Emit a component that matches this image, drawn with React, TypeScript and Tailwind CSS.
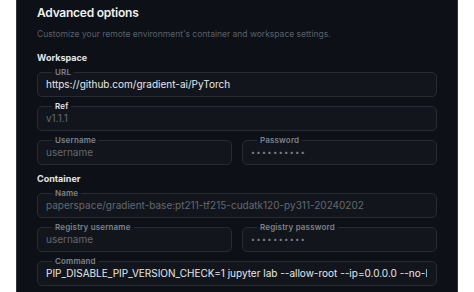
import React from 'react';

type FieldProps = {
  label: string;
  value: string;
  muted?: boolean;
  strongLabel?: boolean;
  secret?: boolean;
};

function Field({ label, value, muted, strongLabel, secret }: FieldProps) {
  return (
    <fieldset className="min-w-0 rounded-[5px] border border-[#272c34] bg-[#12161c] pl-[8px] pr-[9px] pb-[5px]">
      <legend
        className={`ml-[6px] px-[3px] text-[8px] leading-[8px] font-semibold tracking-[0.02em] ${
          strongLabel ? 'text-[#e4e6e9]' : 'text-[#7b828c]'
        }`}
      >
        {label}
      </legend>
      {secret ? (
        <div className="pt-[2px] h-[15px] text-[7px] leading-[13px] tracking-[1.6px] text-[#7b828c]">
          ••••••••••
        </div>
      ) : (
        <div
          className={`pt-[2px] text-[10px] leading-[13px] whitespace-nowrap overflow-hidden ${
            muted ? 'text-[#62686f]' : 'text-[#e6e8eb]'
          }`}
        >
          {value}
        </div>
      )}
    </fieldset>
  );
}

export default function App() {
  return (
    <div className="min-h-screen bg-white px-4 font-['Inter','Liberation_Sans',sans-serif]">
      <div className="h-[292px] overflow-hidden border-x border-[#30343b] bg-[#0d1016] px-5 pt-[5px]">
        <h2 className="text-[12px] leading-[16px] font-semibold tracking-[-0.02em] text-[#eef0f2]">
          Advanced options
        </h2>
        <p className="mt-[7px] text-[8.5px] leading-[12px] text-[#596069]">
          Customize your remote environment's container and workspace settings.
        </p>

        <section className="mt-[12px]">
          <h3 className="text-[9px] leading-[12px] font-bold text-[#e4e6e9]">Workspace</h3>
          <div className="mt-[4px] flex flex-col gap-[5px]">
            <Field label="URL" value="https://github.com/gradient-ai/PyTorch" />
            <Field label="Ref" value="v1.1.1" muted strongLabel />
            <div className="grid grid-cols-2 gap-[10px]">
              <Field label="Username" value="username" muted />
              <Field label="Password" value="" secret />
            </div>
          </div>
        </section>

        <section className="mt-[8px]">
          <h3 className="text-[9px] leading-[12px] font-bold text-[#e4e6e9]">Container</h3>
          <div className="mt-[4px] flex flex-col gap-[5px]">
            <Field label="Name" value="paperspace/gradient-base:pt211-tf215-cudatk120-py311-20240202" muted />
            <div className="grid grid-cols-2 gap-[10px]">
              <Field label="Registry username" value="username" muted />
              <Field label="Registry password" value="" secret />
            </div>
            <Field
              label="Command"
              value="PIP_DISABLE_PIP_VERSION_CHECK=1 jupyter lab --allow-root --ip=0.0.0.0 --no-browser"
            />
          </div>
        </section>
      </div>
    </div>
  );
}
